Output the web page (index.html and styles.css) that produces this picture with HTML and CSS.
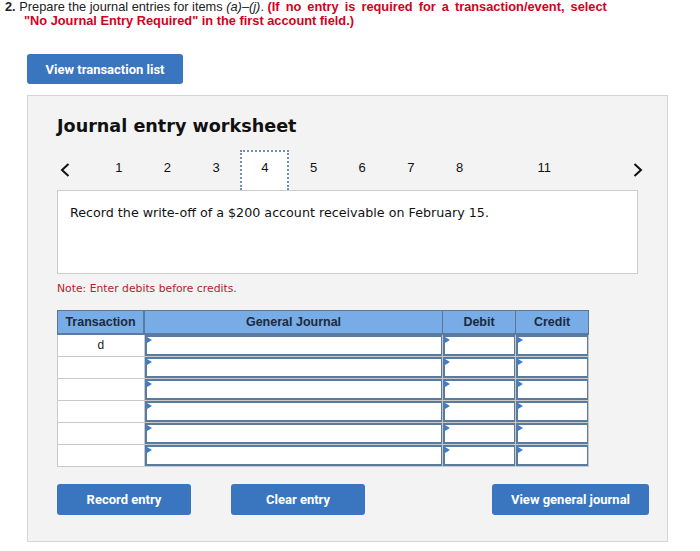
FILE: index.html
```html
<!doctype html>
<html>
<head>
<meta charset="utf-8">
<title>Journal entry worksheet</title>
<link rel="stylesheet" href="styles.css">
</head>

<body>
<div class="intro">
	<b>2.</b> Prepare the journal entries for items <i>(a)</i>–<i>(j)</i>. <span class="warn"><span class="wide">(If no entry is required for a transaction/event, select</span><br>
	<span class="indent">"No Journal Entry Required" in the first account field.)</span></span>
</div>

<button class="btn btn-list">View transaction list</button>

<div class="panel">
	<h2 class="title">Journal entry worksheet</h2>

	<div class="nav">
		<span class="arrow">
			<svg width="10" height="14" viewBox="0 0 10 14"><path d="M8.5 1 L2 7 L8.5 13" fill="none" stroke="#111" stroke-width="2"/></svg>
		</span>
		<span class="num">1</span>
		<span class="num">2</span>
		<span class="num">3</span>
		<span class="num active">4</span>
		<span class="num">5</span>
		<span class="num">6</span>
		<span class="num">7</span>
		<span class="num">8</span>
		<span class="num far">11</span>
		<span class="arrow right">
			<svg width="10" height="14" viewBox="0 0 10 14"><path d="M1.5 1 L8 7 L1.5 13" fill="none" stroke="#111" stroke-width="2"/></svg>
		</span>
	</div>

	<div class="desc">Record the write-off of a $200 account receivable on February 15.</div>

	<div class="note">Note: Enter debits before credits.</div>

	<table class="journal">
		<tr>
			<th class="c-tr">Transaction</th>
			<th class="c-gj">General Journal</th>
			<th class="c-dr">Debit</th>
			<th class="c-cr">Credit</th>
		</tr>
		<tr>
			<td class="tr">d</td>
			<td><div class="inp"></div></td>
			<td><div class="inp"></div></td>
			<td><div class="inp"></div></td>
		</tr>
		<tr>
			<td class="tr"></td>
			<td><div class="inp"></div></td>
			<td><div class="inp"></div></td>
			<td><div class="inp"></div></td>
		</tr>
		<tr>
			<td class="tr"></td>
			<td><div class="inp"></div></td>
			<td><div class="inp"></div></td>
			<td><div class="inp"></div></td>
		</tr>
		<tr>
			<td class="tr"></td>
			<td><div class="inp"></div></td>
			<td><div class="inp"></div></td>
			<td><div class="inp"></div></td>
		</tr>
		<tr>
			<td class="tr"></td>
			<td><div class="inp"></div></td>
			<td><div class="inp"></div></td>
			<td><div class="inp"></div></td>
		</tr>
		<tr>
			<td class="tr"></td>
			<td><div class="inp"></div></td>
			<td><div class="inp"></div></td>
			<td><div class="inp"></div></td>
		</tr>
	</table>

	<div class="actions">
		<button class="btn btn-record">Record entry</button>
		<button class="btn btn-clear">Clear entry</button>
		<button class="btn btn-view">View general journal</button>
	</div>
</div>
</body>
</html>
```

FILE: styles.css
```css
body{
	margin: 0;
	background: #fff;
	font-family: "Liberation Sans", Arial, sans-serif;
	color: #222;
}

.intro{
	padding: 0 5px;
	font-size: 12.8px;
	line-height: 14px;
}
.warn{
	color: #d0021b;
	font-weight: bold;
}
.wide{
	word-spacing: 2.5px;
}
.indent{
	padding-left: 19px;
}

.btn{
	display: block;
	border: none;
	border-radius: 3px;
	background-color: #3a75bf;
	color: #fff;
	font-family: Roboto, "Liberation Sans", sans-serif;
	font-weight: bold;
	font-size: 13px;
	height: 31px;
	cursor: pointer;
}
.btn-list{
	margin: 26px 0 0 27px;
	width: 156px;
	height: 30px;
}

.panel{
	margin: 11px 0 0 27px;
	width: 610px;
	height: 421px;
	padding: 0 0 24px 29px;
	background: #f3f3f3;
	border: 1px solid #d5d5d5;
}
.title{
	margin: 0;
	padding-top: 19px;
	font-family: "DejaVu Sans", Verdana, sans-serif;
	font-size: 17.6px;
	line-height: 22px;
	color: #111;
}

.nav{
	display: flex;
	align-items: center;
	height: 40px;
	margin-top: 13px;
	font-size: 13px;
	color: #111;
}
.arrow{
	width: 35px;
	display: flex;
	padding-left: 3px;
}
.arrow.right{
	margin-left: 61px;
}
.num{
	width: 49.5px;
	height: 40px;
	line-height: 36px;
	text-align: center;
	box-sizing: border-box;
}
.num.active{
	background: #fff;
	border: 2px dotted #6f8fb8;
	border-bottom: none;
	line-height: 32px;
}
.num.far{
	margin-left: 36px;
}

.desc{
	width: 567px;
	height: 68px;
	padding: 14px 0 0 12px;
	background: #fff;
	border: 1px solid #ccc;
	font-family: "DejaVu Sans", Verdana, sans-serif;
	font-size: 12.7px;
	color: #111;
}

.note{
	margin-top: 8px;
	font-family: "DejaVu Sans", Verdana, sans-serif;
	font-size: 10.8px;
	color: #b4232a;
}

.journal{
	margin-top: 15px;
	border-collapse: collapse;
	background: #fff;
}
.journal th{
	height: 22px;
	padding: 0;
	background: #78ace6;
	border: 1px solid #5e7594;
	border-bottom: 2px solid #5b7aa0;
	font-size: 12.5px;
	color: #1b2a40;
}
.c-tr{ width: 85px; }
.c-gj{ width: 297px; border-left: 2px solid #5b7aa0 !important; }
.c-dr{ width: 72px; }
.c-cr{ width: 72px; }

.journal td{
	height: 21px;
	padding: 0;
	border: 1px solid #c9c9c9;
	vertical-align: top;
}
.journal td.tr{
	text-align: center;
	font-size: 12px;
	line-height: 20px;
	color: #222;
}
.inp{
	position: relative;
	height: 17px;
	border: 2px solid #5b7aa0;
	border-right-width: 1px;
	background: #fff;
}
.inp::before{
	content: "";
	position: absolute;
	left: 0;
	top: 0;
	border-left: 5px solid #3b7cd0;
	border-top: 3px solid transparent;
	border-bottom: 3px solid transparent;
}

.actions{
	display: flex;
	margin-top: 17px;
}
.btn-record{ width: 134px; }
.btn-clear{ width: 134px; margin-left: 40px; }
.btn-view{ width: 157px; margin-left: 127px; }
```
